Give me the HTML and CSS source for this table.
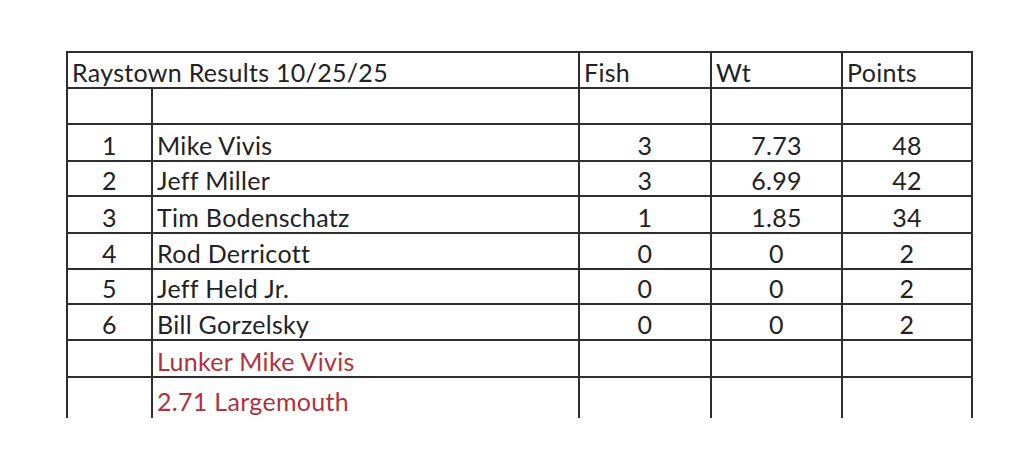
FILE: index.html
```html
<!DOCTYPE html>
<html>
<head>
<meta charset="utf-8">
<link rel="stylesheet" href="styles.css">
</head>
<body>
<div class="sheet">
  <table class="results">
    <colgroup>
      <col class="c-rank">
      <col class="c-name">
      <col class="c-fish">
      <col class="c-wt">
      <col class="c-pts">
    </colgroup>
    <tr class="r-head">
      <td colspan="2" class="left">Raystown Results 10/25/25</td>
      <td class="left">Fish</td>
      <td class="left">Wt</td>
      <td class="left">Points</td>
    </tr>
    <tr class="r-a"><td></td><td></td><td></td><td></td><td></td></tr>
    <tr class="r-b"><td class="num">1</td><td class="left">Mike Vivis</td><td class="num">3</td><td class="num">7.73</td><td class="num">48</td></tr>
    <tr class="r-c"><td class="num">2</td><td class="left">Jeff Miller</td><td class="num">3</td><td class="num">6.99</td><td class="num">42</td></tr>
    <tr class="r-b"><td class="num">3</td><td class="left">Tim Bodenschatz</td><td class="num">1</td><td class="num">1.85</td><td class="num">34</td></tr>
    <tr class="r-a"><td class="num">4</td><td class="left">Rod Derricott</td><td class="num">0</td><td class="num">0</td><td class="num">2</td></tr>
    <tr class="r-c"><td class="num">5</td><td class="left">Jeff Held Jr.</td><td class="num">0</td><td class="num">0</td><td class="num">2</td></tr>
    <tr class="r-a"><td class="num">6</td><td class="left">Bill Gorzelsky</td><td class="num">0</td><td class="num">0</td><td class="num">2</td></tr>
    <tr class="r-b"><td></td><td class="left red">Lunker Mike Vivis</td><td></td><td></td><td></td></tr>
    <tr class="r-last"><td></td><td class="left red">2.71 Largemouth</td><td></td><td></td><td></td></tr>
  </table>
</div>
</body>
</html>
```
FILE: styles.css
```css
html, body {
  margin: 0;
  padding: 0;
  background: #ffffff;
}
.sheet {
  width: 1024px;
  height: 464px;
  padding: 51px 0 0 66px;
  box-sizing: border-box;
  overflow: hidden;
}
.results {
  border-collapse: collapse;
  table-layout: fixed;
  width: 907px;
  font-family: Lato, "Open Sans", sans-serif;
  font-size: 25px;
  letter-spacing: 0.3px;
  color: #222222;
}
.c-rank { width: 85px; }
.c-name { width: 427px; }
.c-fish { width: 132px; }
.c-wt { width: 131px; }
.c-pts { width: 130px; }
.results td {
  border: 2.5px solid #2e2e2e;
  padding: 0 0 3px 4px;
  vertical-align: bottom;
  line-height: 24px;
  white-space: nowrap;
}
.results td.num {
  text-align: center;
  padding-left: 0;
}
.r-head { height: 36px; }
.r-a { height: 36px; }
.r-b { height: 37px; }
.r-c { height: 35px; }
.r-last td { border-bottom: none; padding-bottom: 5px; height: 35px; }
.red { color: #b0323d; }
```
